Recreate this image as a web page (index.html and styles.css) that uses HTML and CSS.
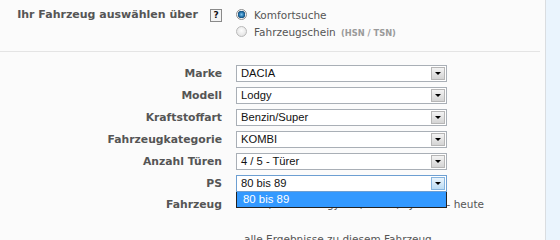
FILE: index.html
```html
<!DOCTYPE html>
<html lang="de">
<head>
<meta charset="utf-8">
<title>Fahrzeugauswahl</title>
<link rel="stylesheet" href="styles.css">
</head>
<body>
<div class="page">
  <div class="main">
    <div class="top">
      <div class="top-label">
        <span class="label">Ihr Fahrzeug auswählen über</span>
        <span class="help">?</span>
      </div>
      <div class="radios">
        <div class="radio-row"><span class="radio checked"></span><span class="radio-text">Komfortsuche</span></div>
        <div class="radio-row"><span class="radio"></span><span class="radio-text">Fahrzeugschein <span class="hint">(HSN / TSN)</span></span></div>
      </div>
    </div>
    <div class="form">
      <div class="label">Marke</div>
      <div class="select"><span class="value">DACIA</span><span class="btn"><span class="tri"></span></span></div>
      <div class="label">Modell</div>
      <div class="select"><span class="value">Lodgy</span><span class="btn"><span class="tri"></span></span></div>
      <div class="label">Kraftstoffart</div>
      <div class="select"><span class="value">Benzin/Super</span><span class="btn"><span class="tri"></span></span></div>
      <div class="label">Fahrzeugkategorie</div>
      <div class="select"><span class="value">KOMBI</span><span class="btn"><span class="tri"></span></span></div>
      <div class="label">Anzahl Türen</div>
      <div class="select"><span class="value">4 / 5 - Türer</span><span class="btn"><span class="tri"></span></span></div>
      <div class="label">PS</div>
      <div class="select focus"><span class="value">80 bis 89</span><span class="btn"><span class="tri"></span></span>
        <div class="dropdown">80 bis 89</div>
      </div>
      <div class="label info-label">Fahrzeug</div>
      <div class="info">DACIA, Dacia Lodgy 1.6, 83 PS, BJ 2011 - heute</div>
      <div class="spacer"></div>
      <div class="more">alle Ergebnisse zu diesem Fahrzeug</div>
    </div>
  </div>
  <div class="side"></div>
</div>
</body>
</html>
```

FILE: styles.css
```css
html, body {
  margin: 0;
  padding: 0;
}
body {
  background: #fbfbfb;
  width: 560px;
  height: 240px;
  overflow: hidden;
  font-family: "DejaVu Sans", Verdana, sans-serif;
  color: #555;
}
.page {
  display: flex;
  height: 240px;
  overflow: hidden;
}
.main {
  width: 545px;
  flex: none;
}
.side {
  flex: 1;
  border-left: 1px solid #dadde0;
  background: #eaf4fd;
}
.top {
  display: grid;
  grid-template-columns: 222px 1fr;
  column-gap: 14px;
  padding-top: 6px;
  height: 45px;
  border-bottom: 1px solid #e4e4e4;
  margin-right: 5px;
}
.top-label {
  display: flex;
  justify-content: flex-end;
  align-items: flex-start;
  gap: 12px;
}
.label {
  font-size: 10.8px;
  font-weight: bold;
  line-height: 17px;
  color: #555;
  text-align: right;
  white-space: nowrap;
}
.top-label .label {
  font-size: 11px;
  line-height: 18px;
}
.help {
  margin-top: 3px;
  width: 10px;
  height: 11px;
  border: 1px solid #8a8a8a;
  background: #f4f4f4;
  color: #111;
  font-size: 9px;
  font-weight: bold;
  line-height: 11px;
  text-align: center;
}
.radios {
  display: flex;
  flex-direction: column;
}
.radio-row {
  display: flex;
  align-items: center;
  height: 17px;
  gap: 7px;
}
.radio {
  width: 9px;
  height: 9px;
  border-radius: 50%;
  border: 1px solid #b9b9b9;
  background: radial-gradient(circle at 50% 40%, #fdfdfd, #dcdcdc);
  flex: none;
}
.radio.checked {
  border-color: #8f8f8f;
  background: radial-gradient(circle at 50% 50%, #7fc3ee 0, #1f6fa6 2.5px, #184e7a 3.5px, #f2f2f2 4px, #e2e2e2 5px);
}
.radio-text {
  font-size: 10.5px;
  color: #555;
  white-space: nowrap;
}
.hint {
  font-size: 8.3px;
  font-weight: bold;
  color: #9a9a9a;
  margin-left: 2px;
}
.form {
  display: grid;
  grid-template-columns: 222px 211px;
  grid-auto-rows: 17px;
  column-gap: 14px;
  row-gap: 5px;
  padding-top: 13px;
}
.select {
  position: relative;
  box-sizing: border-box;
  height: 17px;
  border: 1px solid #a9afb6;
  background: #fff;
  display: flex;
  align-items: center;
}
.value {
  flex: 1;
  padding-left: 4px;
  font-family: "Liberation Sans", Arial, sans-serif;
  font-size: 11.2px;
  color: #111;
  line-height: 15px;
}
.btn {
  box-sizing: border-box;
  width: 14px;
  height: 13px;
  margin-right: 1px;
  border: 1px solid #b6b6b6;
  background: linear-gradient(#f3f3f3, #d4d4d4);
  display: flex;
  align-items: center;
  justify-content: center;
}
.tri {
  width: 0;
  height: 0;
  border-left: 3px solid transparent;
  border-right: 3px solid transparent;
  border-top: 3px solid #000;
}
.select.focus {
  border-color: #6d9fd2;
}
.select.focus .btn {
  border-color: #86b4de;
  background: linear-gradient(#eaf4fc, #bcdcf4);
}
.dropdown {
  position: absolute;
  left: -1px;
  right: -1px;
  top: 16px;
  height: 16px;
  box-sizing: border-box;
  border: 1px solid #222;
  border-top: none;
  background: #3399ff;
  color: #fff;
  font-family: "Liberation Sans", Arial, sans-serif;
  font-size: 11.4px;
  line-height: 15px;
  padding-left: 6px;
}
.info-label {
  line-height: 15px;
}
.info {
  font-size: 10.5px;
  line-height: 15px;
  color: #555;
  white-space: nowrap;
}
.spacer {
  grid-column: 1;
}
.more {
  grid-column: 2;
  font-size: 10.5px;
  color: #555;
  line-height: 15px;
  padding-left: 8px;
  margin-top: 13px;
  white-space: nowrap;
}
```
